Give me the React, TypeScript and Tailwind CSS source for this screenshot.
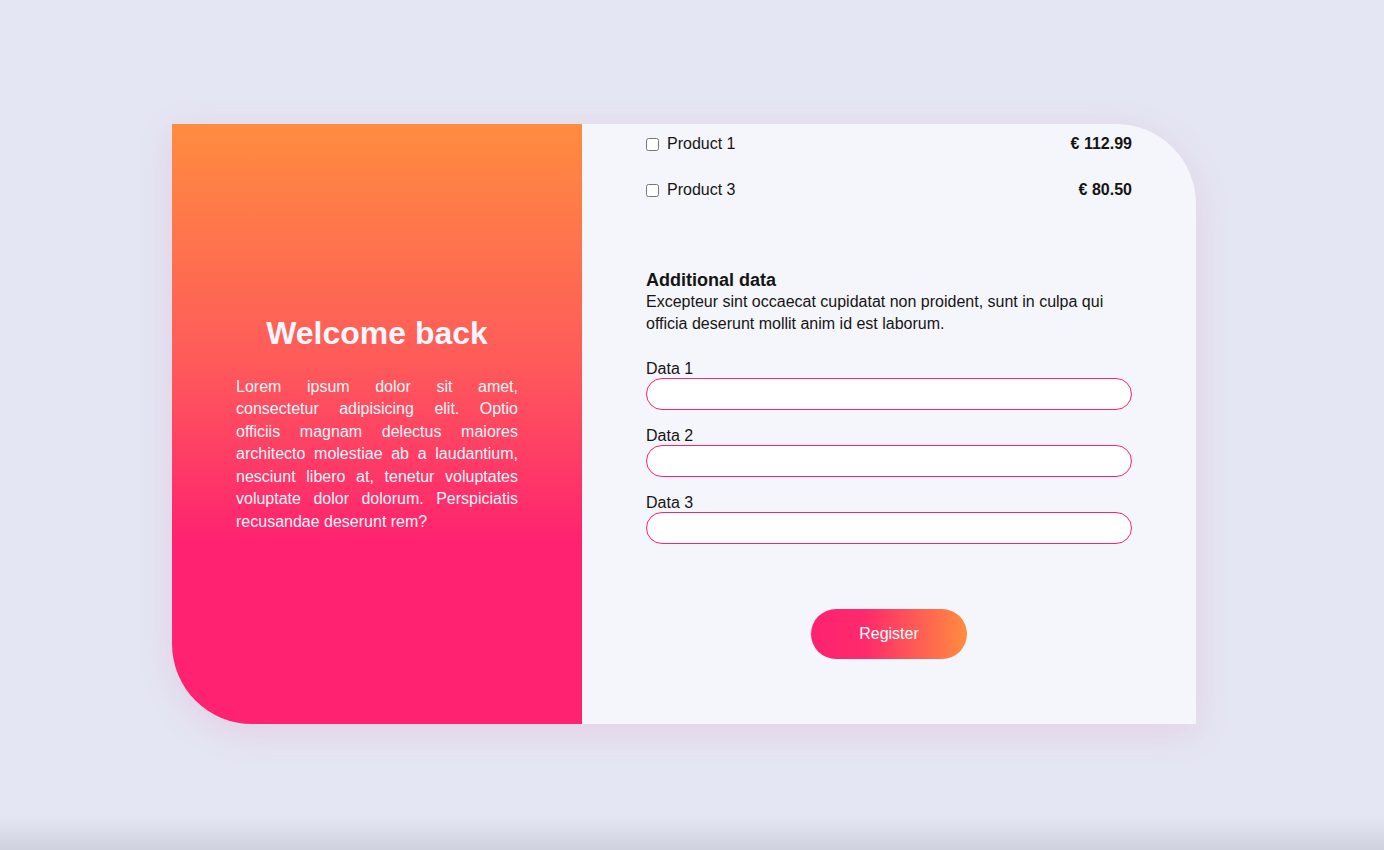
const products = [
  { name: "Product 1", price: "€ 112.99" },
  { name: "Product 3", price: "€ 80.50" },
] as const;

const fields = ["Data 1", "Data 2", "Data 3"] as const;

export default function App() {
  return (
    <div className="flex min-h-screen items-center justify-center bg-[linear-gradient(to_bottom,#e4e6f3_0%,#e4e6f3_96%,#cfd1de_100%)] font-['Liberation_Sans',Arial,sans-serif]">
      {/* Card */}
      <div className="mr-4 mb-0.5 flex h-[600px] w-[1024px] rounded-tr-[80px] rounded-bl-[80px] shadow-[0_8px_36px_rgba(236,72,153,0.14)]">
        {/* Left */}
        <section className="flex w-[410px] flex-col items-center justify-center rounded-bl-[80px] bg-[linear-gradient(to_bottom,#ff8c3f_0%,#fe5a5a_40%,#fe2270_70%,#fe2270_100%)] px-16 text-[#f5f6fb]">
          <h1 className="text-[32px] font-bold leading-[37px]">Welcome back</h1>
          <p className="mt-6 text-justify text-base leading-[22.5px]">
            Lorem ipsum dolor sit amet, consectetur adipisicing elit. Optio officiis magnam delectus maiores
            architecto molestiae ab a laudantium, nesciunt libero at, tenetur voluptates voluptate dolor dolorum.
            Perspiciatis recusandae deserunt rem?
          </p>
        </section>

        {/* Right */}
        <section className="flex flex-1 flex-col rounded-tr-[80px] bg-[#f5f6fb] px-16 pt-px text-[#151515]">
          <div className="flex flex-col gap-2">
            {products.map((p) => (
              <label key={p.name} className="flex h-[38px] items-center text-base">
                <input type="checkbox" className="m-0 h-[13px] w-[13px]" />
                <span className="ml-2">{p.name}</span>
                <span className="ml-auto font-bold">{p.price}</span>
              </label>
            ))}
          </div>

          <h2 className="mt-[61px] text-lg font-bold leading-[21px]">Additional data</h2>
          <p className="text-base leading-[22px]">
            Excepteur sint occaecat cupidatat non proident, sunt in culpa qui officia deserunt mollit anim id est
            laborum.
          </p>

          <div className="mt-6 flex flex-col gap-4">
            {fields.map((f) => (
              <label key={f} className="flex flex-col text-base">
                <span className="leading-[19px]">{f}</span>
                <input
                  type="text"
                  className="h-8 rounded-full border border-[#fe2270] bg-white px-4 outline-none"
                />
              </label>
            ))}
          </div>

          <div className="mt-[65px] flex justify-center">
            <button className="h-[50px] w-[156px] rounded-full bg-[linear-gradient(to_right,#fe2270_0%,#fe2a6c_35%,#ff8c3f_100%)] text-base text-white">
              Register
            </button>
          </div>
        </section>
      </div>
    </div>
  );
}
